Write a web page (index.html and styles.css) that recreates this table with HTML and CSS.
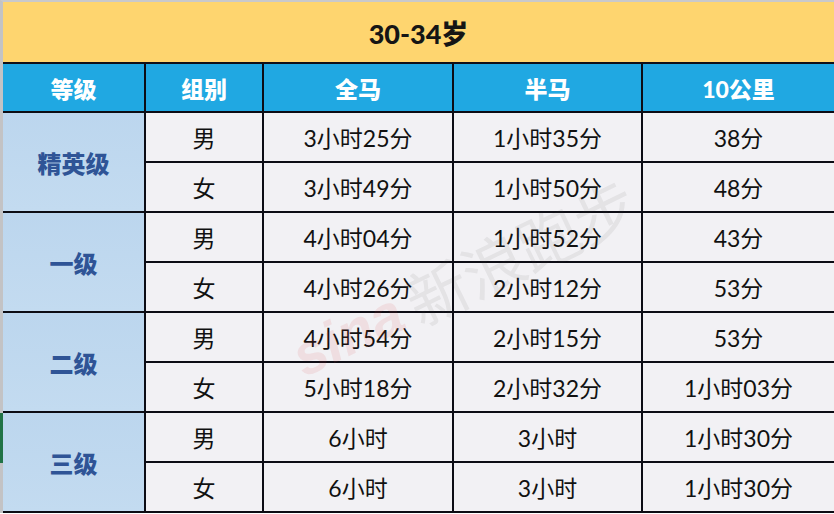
FILE: index.html
```html
<!DOCTYPE html>
<html lang="zh">
<head>
<meta charset="utf-8">
<link rel="stylesheet" href="styles.css">
</head>
<body>
<div class="sheet">
  <div class="title">30-34岁</div>
  <div class="grid">
    <div class="hd">等级</div>
    <div class="hd">组别</div>
    <div class="hd">全马</div>
    <div class="hd">半马</div>
    <div class="hd">10公里</div>

    <div class="lvl">精英级</div>
    <div class="cell">男</div><div class="cell">3小时25分</div><div class="cell">1小时35分</div><div class="cell">38分</div>
    <div class="cell">女</div><div class="cell">3小时49分</div><div class="cell">1小时50分</div><div class="cell">48分</div>

    <div class="lvl">一级</div>
    <div class="cell">男</div><div class="cell">4小时04分</div><div class="cell">1小时52分</div><div class="cell">43分</div>
    <div class="cell">女</div><div class="cell">4小时26分</div><div class="cell">2小时12分</div><div class="cell">53分</div>

    <div class="lvl">二级</div>
    <div class="cell">男</div><div class="cell">4小时54分</div><div class="cell">2小时15分</div><div class="cell">53分</div>
    <div class="cell">女</div><div class="cell">5小时18分</div><div class="cell">2小时32分</div><div class="cell">1小时03分</div>

    <div class="lvl">三级</div>
    <div class="cell">男</div><div class="cell">6小时</div><div class="cell">3小时</div><div class="cell">1小时30分</div>
    <div class="cell">女</div><div class="cell">6小时</div><div class="cell">3小时</div><div class="cell">1小时30分</div>
  </div>
  <div class="mark"></div>
  <div class="watermark"><span class="wm-logo">sina</span><span class="wm-text">新浪跑步</span></div>
</div>
</body>
</html>
```
FILE: styles.css
```css
html, body {
  margin: 0;
  padding: 0;
  background: #ffffff;
}
body {
  width: 834px;
  height: 514px;
  overflow: hidden;
  font-family: Lato, "Noto Sans CJK SC", sans-serif;
}
.sheet {
  position: relative;
  width: 831px;
  border-left: 3px solid #c3c3c5;
  border-top: 2px solid #c9c9cb;
}
.title {
  height: 60px;
  background: #fed56f;
  border-bottom: 2px solid #101018;
  display: flex;
  align-items: center;
  justify-content: center;
  font-weight: 900;
  font-size: 27px;
  color: #151515;
}
.grid {
  display: grid;
  grid-template-columns: 141px 116px 188px 187px 1fr;
  grid-template-rows: 47px repeat(8, 48px);
  gap: 2px;
  background: #0c0c14;
  border-bottom: 2px solid #0c0c14;
}
.hd {
  background: #20a8e2;
  color: #ffffff;
  font-weight: 900;
  font-size: 23px;
  display: flex;
  align-items: center;
  justify-content: center;
}
.lvl {
  grid-column: 1;
  grid-row: span 2;
  background: linear-gradient(180deg, #bcd6ee 0%, #c3dbf0 100%);
  color: #2f5496;
  font-weight: 900;
  font-size: 24px;
  display: flex;
  align-items: center;
  justify-content: center;
}
.cell {
  background: #f2f1f4;
  color: #111111;
  font-size: 23px;
  display: flex;
  align-items: center;
  justify-content: center;
}
.mark {
  position: absolute;
  left: -3px;
  top: 411px;
  width: 3px;
  height: 50px;
  background: #217346;
}
.watermark {
  position: absolute;
  left: 292px;
  top: 312px;
  display: flex;
  align-items: center;
  gap: 10px;
  transform: rotate(-26deg);
  transform-origin: left center;
  pointer-events: none;
}
.wm-logo {
  font-family: "Liberation Sans", sans-serif;
  font-weight: 700;
  font-style: italic;
  font-size: 58px;
  color: rgba(220, 60, 60, 0.10);
}
.wm-text {
  font-family: "Noto Sans CJK SC", sans-serif;
  font-size: 62px;
  color: rgba(60, 60, 60, 0.08);
}
```
